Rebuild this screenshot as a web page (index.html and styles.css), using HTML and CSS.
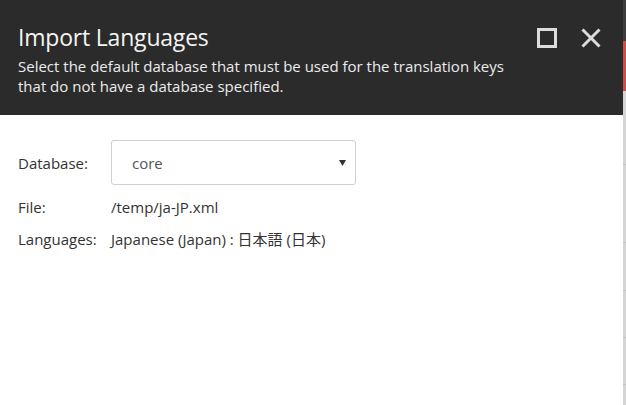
FILE: index.html
```html
<!DOCTYPE html>
<html lang="en">
<head>
<meta charset="utf-8">
<title>Import Languages</title>
<link rel="stylesheet" href="styles.css">
</head>
<body>
<div class="page">
  <div class="dialog">
    <div class="header">
      <div class="header-top">
        <h1 class="title">Import Languages</h1>
        <div class="controls">
          <svg class="icon" width="20" height="20" viewBox="0 0 20 20"><rect x="1.5" y="1.5" width="17" height="17" fill="none" stroke="#dcdcdc" stroke-width="3"/></svg>
          <svg class="icon" width="20" height="20" viewBox="0 0 20 20"><path d="M1.5 1.5 L18.5 18.5 M18.5 1.5 L1.5 18.5" stroke="#dcdcdc" stroke-width="3" fill="none"/></svg>
        </div>
      </div>
      <p class="subtitle">Select the default database that must be used for the translation keys that do not have a database specified.</p>
    </div>
    <div class="body">
      <div class="form">
        <div class="label">Database:</div>
        <div class="select">
          <span class="select-value">core</span>
          <svg class="arrow" width="7" height="6" viewBox="0 0 7 6"><polygon points="0,0 7,0 3.5,6" fill="#333"/></svg>
        </div>
        <div class="label">File:</div>
        <div class="value">/temp/ja-JP.xml</div>
        <div class="label">Languages:</div>
        <div class="value">Japanese (Japan) : 日本語 (日本)</div>
      </div>
    </div>
  </div>
  <div class="strip">
    <div class="strip-dark"></div>
    <div class="strip-red"></div>
    <div class="strip-grey">
      <div class="seg s1"></div>
      <div class="seg s2"></div>
      <div class="seg s3"></div>
      <div class="seg s4"></div>
      <div class="seg s5"></div>
      <div class="seg s6"></div>
    </div>
  </div>
</div>
</body>
</html>
```
FILE: styles.css
```css
* { box-sizing: border-box; }
html, body { margin: 0; padding: 0; }
body {
  font-family: "Open Sans", "Noto Sans CJK JP", sans-serif;
  background: #fff;
  width: 626px;
  height: 405px;
  overflow: hidden;
}
.page {
  display: flex;
  height: 405px;
}
.dialog {
  width: 623px;
  display: flex;
  flex-direction: column;
  background: #fff;
}
.header {
  background: #2b2b2b;
  color: #fff;
  padding: 21px 22px 18px 18px;
  height: 115px;
}
.header-top {
  display: flex;
  justify-content: space-between;
  align-items: flex-start;
}
.title {
  margin: 0;
  font-size: 23px;
  line-height: 32px;
  font-weight: 400;
  letter-spacing: -0.2px;
  color: #f4f4f4;
}
.controls {
  display: flex;
  gap: 24px;
  padding-top: 7px;
}
.icon { display: block; }
.subtitle {
  margin: 3px 0 0 0;
  font-size: 15px;
  line-height: 20px;
  color: #ececec;
  max-width: 500px;
}
.body {
  padding: 25px 18px;
  flex: 1;
}
.form {
  display: grid;
  grid-template-columns: 93px 1fr;
  row-gap: 12px;
  align-items: center;
  font-size: 15px;
  line-height: 20px;
  color: #333;
}
.select {
  width: 245px;
  height: 45px;
  border: 1px solid #d0d0d0;
  border-radius: 3px;
  display: flex;
  align-items: center;
  justify-content: space-between;
  padding: 0 9px 0 20px;
  background: #fff;
}
.select-value {
  color: #555;
  font-size: 15px;
  padding-top: 1px;
}
.arrow { display: block; }
.strip {
  width: 3px;
  display: flex;
  flex-direction: column;
}
.strip-dark { height: 62px; background: #3d3d3d; }
.strip-red { height: 76px; background: #c6504c; }
.strip-grey {
  flex: 1;
  background: #d5d5d5;
  display: flex;
  flex-direction: column;
}
.seg { border-bottom: 1px solid #c2c2c2; }
.s1 { height: 74px; }
.s2 { height: 78px; }
.s3 { height: 48px; }
.s4 { height: 47px; }
.s5 { height: 47px; }
.s6 { height: 20px; border-bottom: none; }
```
